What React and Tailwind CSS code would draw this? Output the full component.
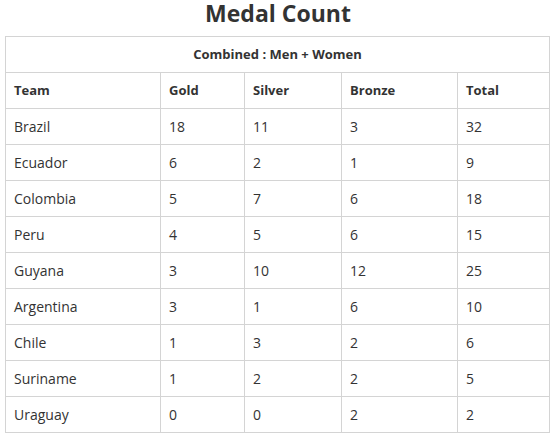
import React from 'react';

const rows = [
    ['Brazil', 18, 11, 3, 32],
    ['Ecuador', 6, 2, 1, 9],
    ['Colombia', 5, 7, 6, 18],
    ['Peru', 4, 5, 6, 15],
    ['Guyana', 3, 10, 12, 25],
    ['Argentina', 3, 1, 6, 10],
    ['Chile', 1, 3, 2, 6],
    ['Suriname', 1, 2, 2, 5],
    ['Uraguay', 0, 0, 2, 2],
];

const headers = ['Team', 'Gold', 'Silver', 'Bronze', 'Total'];

function App() {
    return (<div className="w-[556px] h-[438px] bg-white text-[#333] font-['Open_Sans',sans-serif] overflow-hidden">
        <div className="h-[36px]">
            <h1 className="text-center text-[23px] font-bold leading-[27px]">Medal Count</h1>
        </div>
        <table className="ml-[5px] w-[544px] border-collapse table-fixed text-[14px]">
            <colgroup>
                <col className="w-[155px]"/>
                <col className="w-[84px]"/>
                <col className="w-[97px]"/>
                <col className="w-[116px]"/>
                <col className="w-[92px]"/>
            </colgroup>
            <thead>
            <tr className="h-[36px]">
                <th colSpan={5} className="border border-[#d4d4d4] text-center font-bold text-[13px]">
                    Combined : Men + Women
                </th>
            </tr>
            <tr className="h-[36px]">
                {headers.map(h => (
                    <th key={h} className="border border-[#d4d4d4] text-left font-bold px-[8px] text-[13px]">{h}</th>
                ))}
            </tr>
            </thead>
            <tbody>
            {rows.map(r => (
                <tr key={r[0]} className="h-[36px]">
                    {r.map((c, i) => (
                        <td key={i} className="border border-[#d4d4d4] px-[8px]">{c}</td>
                    ))}
                </tr>
            ))}
            </tbody>
        </table>
    </div>);
}

export default App;
